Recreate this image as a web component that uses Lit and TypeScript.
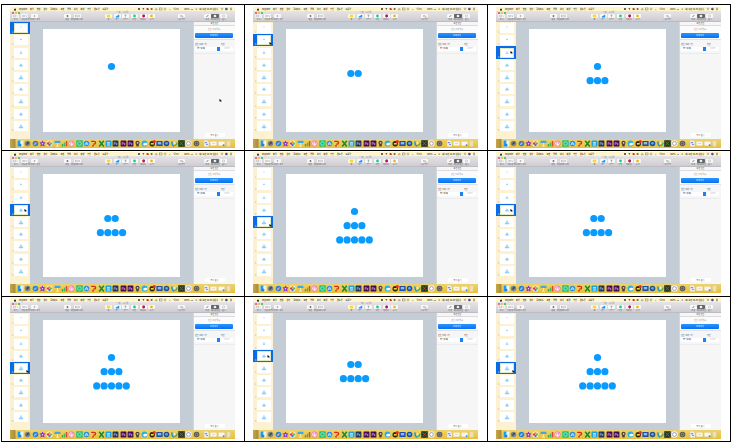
import { LitElement, html, svg, css, TemplateResult } from "lit";
import { customElement, property } from "lit/decorators.js";

const STEPS: number[][] = [[1], [2], [1, 3], [2, 4], [1, 3, 5]];
const THUMBS = [0, 1, 2, 3, 4, 3, 4, 3, 4];

// Dots stacked in centred rows, drawn on a 137 x 103 slide.
const dots = (step: number) => {
  const rows = STEPS[step];
  const top = rows[0] === 1 ? 37.5 : 44.5;
  return svg`${rows.map((count, r) =>
    Array.from({ length: count }, (_, i) => svg`<circle
      cx=${68.5 + (i - (count - 1) / 2) * 7.4} cy=${top + r * 14.2} r="3.6" fill="#0a9bff"/>`)
  )}`;
};

// At thumbnail size the dots melt into a soft pile.
const pile = (step: number) => {
  const rows = STEPS[step];
  const top = rows[0] === 1 ? 38 : 44;
  return svg`<g fill="#3fb0f8" opacity=".6">${rows.map((count, r) => {
    const w = count * 9;
    return svg`<rect x=${68.5 - w / 2} y=${top + r * 14 - 6} width=${w} height="14" rx="4"/>`;
  })}</g>`;
};

const tile = (bg: string, fg: string) => svg`
  <rect x="0.6" y="0.6" width="5.8" height="5.8" rx="0.4" fill=${bg}/>
  <path d="M2 5V2.4h1.4v1.4H2M4.4 5V3.2M5.4 3.2h-0.8v1.6h0.8" stroke=${fg} stroke-width="0.6" fill="none"/>`;
const disc = (bg: string, inner: unknown) => svg`<circle cx="3.5" cy="3.5" r="2.8" fill=${bg}/>${inner}`;

const DOCK: [string, unknown][] = [
  ["Finder", svg`<rect x=".6" y=".6" width="5.8" height="5.8" fill="#eaf4fc"/><path d="M.6.6h3L3 3.6h1v2.8H.6z" fill="#1c9cf0"/><path d="M2 4.8q1.6 1 3 0" stroke="#24466c" stroke-width=".5" fill="none"/>`],
  ["Launchpad", disc("#7e858c", svg`<path d="M2 5l1-2.4 2-1-.6 2.2z" fill="#333b44"/>`)],
  ["Safari", disc("#1d83e4", svg`<path d="M2 5l1-2 2-1-1 2z" fill="#fff"/><path d="M3 3l2-1-1 2z" fill="#e34a3a"/>`)],
  ["iMovie", svg`<path d="M3.5.4l1 1.9 2.1.2-1.5 1.6.5 2.3-2.1-1-2.1 1 .5-2.3L.4 2.5l2.1-.2z" fill="#8a2fc8"/><circle cx="3.5" cy="3.7" r=".8" fill="#eed8ff"/>`],
  ["사진", svg`<circle cx="3.5" cy="3.5" r="3" fill="#fff"/><circle cx="3.5" cy="2" r="1.2" fill="#f6a21c"/><circle cx="5" cy="3.5" r="1.2" fill="#6cc04a"/><circle cx="3.5" cy="5" r="1.2" fill="#4576d6"/><circle cx="2" cy="3.5" r="1.2" fill="#e2365c"/>`],
  ["Keynote", svg`<path d="M.8.8h5.4l.4 2.2H.4z" fill="#3aa9ec"/><path d="M3.2 3h.7v2.8h-.7zM2 5.8h3v.7H2z" fill="#eef5f8"/>`],
  ["Numbers", svg`<path d="M.8 4h1.4v2.4H.8z" fill="#27b14c"/><path d="M2.8 2.6h1.4v3.8H2.8z" fill="#36c25a"/><path d="M4.8 1h1.5v5.4H4.8z" fill="#e2453b"/>`],
  ["iTunes", svg`<circle cx="3.5" cy="3.5" r="2.7" fill="#fff" stroke="#e8589c" stroke-width=".7"/><path d="M2.8 4.8V2.2l2-.4v2.6" stroke="#d84bb0" stroke-width=".6" fill="none"/>`],
  ["메시지", svg`<rect x=".3" y=".3" width="6.4" height="6.4" fill="#1fc07a"/><circle cx="3.5" cy="3.5" r="1.8" fill="none" stroke="#b9f4d6" stroke-width=".7"/>`],
  ["App Store", disc("#2390f2", svg`<path d="M2 5l1.5-3L5 5M1.8 4h3.4" stroke="#fff" stroke-width=".6" fill="none"/>`)],
  ["PowerPoint", svg`<path d="M1.2 1.3h3a1.4 1.4 0 0 1 0 2.8H3.2" stroke="#d82c16" stroke-width="1.3" fill="none"/><path d="M2.2 5h1.6v1.5H2.2z" fill="#d82c16"/>`],
  ["Excel", svg`<path d="M1.2.8l4.6 5.6M5.8.8L1.2 6.4" stroke="#148a38" stroke-width="1.5" fill="none"/>`],
  ["Skype", svg`<rect x=".5" y=".4" width="6" height="6.2" rx="1" fill="#19a5e6"/><path d="M2 2h3v.8H2zM2 3.4h3v.8H2zM2 4.8h3v.6H2z" fill="#d8f4ff"/>`],
  ["Photoshop", tile("#20305c", "#8fb6ea")],
  ["Premiere", tile("#430b4e", "#d68be4")],
  ["After Effects", tile("#3c0b52", "#c79bf0")],
  ["Final Cut", svg`<circle cx="3.5" cy="2.8" r="2.1" fill="#46423a"/><path d="M2.3 4h2.4v2.4H2.3z" fill="#4b3c2c"/><circle cx="3.6" cy="2.8" r=".9" fill="#d9d4c4"/>`],
  ["Explorer", svg`<circle cx="3.5" cy="3.5" r="2.9" fill="#25b0ee"/><path d="M2 4q2-2 4.6-.6-1 2.6-3.8 1.8z" fill="#fff"/>`],
  ["카카오톡", svg`<circle cx="3.2" cy="3.7" r="2.7" fill="#2b2417"/><path d="M1.8 3h3v1.6h-3z" fill="#f6d531"/><circle cx="5.2" cy="1.6" r="1.6" fill="#ee2a20"/>`],
  ["미리보기", svg`<rect x=".4" y="1" width="6.2" height="5" rx=".5" fill="#1e4fae"/><path d="M1.8 2h3.4v2.4H1.8z" fill="#8fb9f2"/>`],
  ["QuickTime", svg`<circle cx="3.5" cy="3.5" r="2.8" fill="#1b4f9c"/><circle cx="3.5" cy="3.3" r="1.4" fill="#59a8f0"/>`],
  ["네트워크", svg`<path d="M1 1.4q-.4 4 2.2 4.6" stroke="#1a92cf" stroke-width="1.4" fill="none"/><path d="M3.4 5.6q2.6-.2 2.6-3" stroke="#42aa5f" stroke-width="1.2" fill="none"/><circle cx="3.6" cy="3" r=".9" fill="#f2f2e6"/>`],
  ["활동 상태", svg`<rect x=".2" y=".2" width="6.6" height="6.6" fill="#26352a"/><path d="M1.4 1.4l4 4M5.4 1.4l-4 4" stroke="#4c8a3c" stroke-width=".8"/><circle cx="3.5" cy="3.5" r=".7" fill="#c43c2a"/>`],
  ["디스크", svg`<circle cx="3.5" cy="3.5" r="3.2" fill="#f4f2f4"/><circle cx="3.5" cy="3.5" r="1.9" fill="#fff" stroke="#6a6a8c" stroke-width=".6"/>`],
  ["설정", svg`<circle cx="3.5" cy="3.5" r="2.8" fill="#55575b"/><circle cx="3.5" cy="3.5" r="1.4" fill="none" stroke="#a0a2a6" stroke-width=".7"/>`],
];

const FOLDERS: [string, unknown][] = [
  ["문서", svg`<path d="M1.2.5h3.2l1.4 1.4v4.6H1.2z" fill="#e8eefc"/><path d="M1.8 2h2.4v1.2H1.8zM3 4h2v1H3z" fill="#7f95dd"/>`],
  ["다운로드", svg`<path d="M.4 1.6h6.2v4H.4z" fill="#f6f6f6"/><path d="M2 3h3v.8H2z" fill="#d3d3dc"/>`],
  ["스크린샷", svg`<path d="M.4 1.6h6.2v4H.4z" fill="#f4f6fb"/><path d="M4.8 4.4h1.6v1.6H4.8z" fill="#2b8ceb"/>`],
  ["휴지통", svg`<path d="M1.4.8h4.2L5.2 6.5H1.8z" fill="#eee2b4" stroke="#d5c89c" stroke-width=".4"/>`],
];

const shape = (kind: string): unknown => {
  switch (kind) {
    case "play": return svg`<path d="M3.2.9l2.2 1.1-2.2 1.1z" fill="#333"/>`;
    case "plus": return svg`<path d="M4 1v2M3 2h2" stroke="#777" stroke-width=".5"/>`;
    case "pane": return svg`<path d="M1.4 1h2.8v2H1.4zM5.4 1.6l.7.8.7-.8" stroke="#999" stroke-width=".5" fill="none"/>`;
    case "zoom": return svg`<path d="M1.4 2h3M5.4 1.6l.7.8.7-.8" stroke="#555" stroke-width=".6" fill="none"/>`;
    case "live": return svg`<rect x="2" y="1" width="4" height="2" fill="none" stroke="#999" stroke-width=".5"/>`;
    case "table": return svg`<rect x="2" y=".4" width="4" height="3.2" fill="#ffd91e"/>`;
    case "chart": return svg`<path d="M2 3.6V2.6L6 .4v3.2z" fill="#169af5"/>`;
    case "text": return svg`<path d="M2.8 1h2.4M4 1v2.4" stroke="#777" stroke-width=".6"/>`;
    case "shape": return svg`<circle cx="4" cy="2" r="1.6" fill="#15d08c"/>`;
    case "media": return svg`<circle cx="4" cy="2" r="1.6" fill="#e31f2c"/><path d="M4 .4a1.6 1.6 0 0 1 0 3.2z" fill="#8c1a86"/>`;
    case "note": return svg`<circle cx="4" cy="2" r="1.6" fill="#ffd21a"/><path d="M3 2h2" stroke="#b46c10" stroke-width=".7"/>`;
    case "share": return svg`<path d="M2.8 3.2V1.4h1.6M4 2h1.6v1.2H3.4" stroke="#888" stroke-width=".5" fill="none"/>`;
    case "brush": return svg`<path d="M2.8 3.2L4.8 1" stroke="#444" stroke-width=".8"/>`;
    case "motion": return svg`<path d="M4 .5l1.6 1.5L4 3.5 2.4 2z" fill="#fff"/>`;
    default: return svg`<circle cx="4" cy="2" r="1.3" fill="none" stroke="#888" stroke-width=".4"/>`;
  }
};

const tool = (kind: string, label: string): TemplateResult => html`
  <button class="tool ${kind === "motion" ? "active" : ""}">
    <svg class="glyph" viewBox="0 0 8 4" aria-hidden="true">${shape(kind)}</svg>
    <span class="caption">${label}</span>
  </button>`;

@customElement("keynote-screen")
export class KeynoteScreen extends LitElement {
  @property({ type: Number }) selected = 0;
  @property({ type: Number }) index = 0;

  static styles = css`
    :host {
      display: grid;
      grid-template-rows: 4px 11px 117px 9px;
      overflow: hidden;
      position: relative;
      color: #4a463a;
      font: 2px/3px "Noto Sans CJK KR", "Liberation Sans", sans-serif;
    }
    * { box-sizing: border-box; }
    button, select, input { font: inherit; color: inherit; margin: 0; padding: 0; border: 0; background: none; }
    svg { display: block; }

    .menubar { display: flex; align-items: center; justify-content: space-between; background: #fff5cb; padding: 0 3px 0 4px; color: #4b473a; font-weight: 700; }
    .menus, .status { display: flex; align-items: center; gap: 3px; white-space: nowrap; }
    .apple { width: 2px; height: 3px; }
    .status { gap: 2px; }
    .status svg { width: 44px; height: 4px; }
    .status .tail { width: 12px; }

    .toolbar { background: linear-gradient(#e6e4e7, #cfcdd1); border-bottom: 1px solid #bdbcc2; display: grid; grid-template-rows: 3px 7px; }
    .titlebar { display: grid; grid-template-columns: 1fr auto 1fr; align-items: center; padding: 0 2px; }
    .lights { display: flex; gap: 1px; }
    .light { width: 2px; height: 2px; border-radius: 1px; background: #f4433c; }
    .light.min { background: #f5b52c; }
    .light.max { background: #29bf3b; }
    .title { color: #77757b; }
    .tools { display: grid; grid-template-columns: 29fr 23fr 20fr 22fr 52fr 20fr 10fr 17fr 25fr 7fr; align-items: start; }
    .group { display: flex; justify-content: space-between; }
    .group.first { padding-left: 1px; }
    .tool { flex: 1; min-width: 0; display: flex; flex-direction: column; align-items: center; color: #55535a; }
    .glyph { width: 7px; height: 4px; background: #f8f8f9; border-radius: 1px; }
    .active .glyph { background: #66666a; width: 8px; }
    .caption { white-space: nowrap; }

    .work { display: grid; grid-template-columns: 20px 1fr 42px; min-height: 0; }
    .slides { list-style: none; margin: 0; padding: 0 0 7px; background: linear-gradient(90deg, #fbf0cf, #fdf3d4); display: grid; grid-auto-rows: 1fr; }
    .slides li { display: flex; min-height: 0; }
    .slide-button { width: 100%; display: flex; align-items: center; justify-content: flex-end; padding-right: 2px; gap: 1px; }
    .number { color: #a39e88; align-self: end; }
    .thumb { width: 14px; height: 10px; background: #fff; }
    .selected .slide-button { background: #0a6be6; }
    .selected .thumb { box-shadow: inset 0 0 0 1px #dfe9c4; }
    .selected .number { color: #fff; }

    .stage { background: #c4ccd6; padding: 7px 13px; }
    .canvas { width: 100%; height: 103px; background: #fff; }

    .panel { background: #f6f6f7; border-left: 1px solid #d4d6da; display: flex; flex-direction: column; }
    .heading { height: 4px; text-align: center; border-bottom: 1px solid #dcdcde; }
    .effect { height: 14px; padding: 2px 2px 0 1px; background: #fbfbfb; border-bottom: 1px solid #e2e2e4; display: grid; grid-template-rows: 5px 5px; text-align: center; color: #98989c; }
    .add { background: linear-gradient(#2a95ff, #0670f3); color: #fff; border-radius: 1px; }
    .timing { padding: 3px 2px 0 1px; display: grid; grid-template-columns: 25px 12px; column-gap: 1px; row-gap: 1px; height: 14px; grid-template-rows: 3px 4px; border-bottom: 1px solid #ececee; }
    .timing label { color: #444; }
    .field { height: 4px; min-width: 0; width: 100%; background: #fff; line-height: 4px; }
    select.field { appearance: none; padding-left: 2px; background: linear-gradient(#1b82f6, #1b82f6) right / 3px 4px no-repeat #fff; color: #222; }
    input.field { text-align: center; color: #b4b4b8; }
    .order { margin: auto 0 2px; align-self: center; width: 20px; height: 4px; background: #fff; border-radius: 1px; }

    .dock { background: linear-gradient(90deg, #c9a746, #a98c3c 5px, #0000 6px), linear-gradient(#ecd36d, #e8bf3c); display: flex; align-items: center; padding: 0 3px 0 7px; }
    .apps { flex: 181; display: flex; }
    .folders { flex: 29; display: flex; margin-left: 3px; }
    .icon { flex: 1; min-width: 0; }
    .icon svg { width: 7px; height: 7px; margin: auto; }

    .cursor { position: absolute; width: 3px; height: 3px; }
  `;

  render() {
    const free = this.index === 0;
    const low = this.selected === 1 || this.selected === 4;
    const left = free ? 209 : low ? 16 : 14;
    const top = free ? 92 : 15 + Math.round(this.selected * 12.2) + (low ? 8 : 5);
    return html`
      <nav class="menubar">
        <div class="menus">
          <svg class="apple" viewBox="0 0 2 3"><circle cx="1" cy="1.8" r="1" fill="#222"/><path d="M1 .8L1.5.1" stroke="#222" stroke-width=".4"/></svg>
          <span class="app">Keynote</span>
          ${["파일", "편집", "삽입", "슬라이드", "포맷", "정렬", "보기", "재생", "공유", "윈도우", "도움말"].map((m) => html`<span>${m}</span>`)}
        </div>
        <div class="status">
          <svg viewBox="0 0 44 4" aria-hidden="true">
            <g fill="#6a6655"><rect x="0" y="1" width="2" height="2"/><path d="M4.4 1h2l-1 2.2z"/><circle cx="13.6" cy="2" r="1.1"/><path d="M38 1.2h3v1.6h-3z" opacity=".5"/></g>
            <path d="M8.6 1h1.6l.8 2H8.6z" fill="#d8301f"/>
            <g fill="none" stroke="#7a7665" stroke-width=".5"><path d="M17 2.8l1.2-1.6 1.2 1.6z"/><rect x="21.4" y="1" width="2.6" height="2"/><circle cx="27" cy="2" r="1"/><path d="M31 2.6h1.4M35.6 1.4q1.4-.8 2.6 0L36.9 3z"/></g>
          </svg>
          <span>100%</span><span>▭</span><span>A</span><span>(화) 오전 10:48 김현수</span>
          <svg class="tail" viewBox="0 0 12 4" aria-hidden="true"><circle cx="2" cy="1.8" r=".8" fill="none" stroke="#555" stroke-width=".4"/><circle cx="6.4" cy="2" r="1.2" fill="#44307c"/><circle cx="6.8" cy="1.7" r=".5" fill="#3cc6e8"/><path d="M10 1.2h2M10 2h2M10 2.8h2" stroke="#444" stroke-width=".4"/></svg>
        </div>
      </nav>
      <header class="toolbar">
        <div class="titlebar">
          <div class="lights"><span class="light"></span><span class="light min"></span><span class="light max"></span></div>
          <span class="title">무제 — 수정됨</span>
        </div>
        <div class="tools">
          <div class="group first">${tool("pane", "보기")}${tool("zoom", "확대/축소")}${tool("plus", "슬라이드 추가")}</div>
          <span></span>
          <div class="group">${tool("play", "재생")}${tool("live", "Keynote Live")}</div>
          <span></span>
          <div class="group">${tool("table", "표")}${tool("chart", "차트")}${tool("text", "텍스트")}${tool("shape", "도형")}${tool("media", "미디어")}${tool("note", "주석")}</div>
          <span></span>
          <div class="group">${tool("share", "공동 작업")}</div>
          <span></span>
          <div class="group">${tool("brush", "포맷")}${tool("motion", "애니메이션")}${tool("doc", "문서")}</div>
        </div>
      </header>
      <main class="work">
        <ol class="slides">
          ${THUMBS.map((step, i) => html`
            <li class=${i === this.selected ? "selected" : ""}>
              <button class="slide-button" aria-label="슬라이드 ${i + 1}">
                <span class="number">${i + 1}</span>
                <svg class="thumb" viewBox="0 0 137 103" aria-hidden="true">${pile(step)}</svg>
              </button>
            </li>`)}
        </ol>
        <section class="stage"><svg class="canvas" viewBox="0 0 137 103">${dots(this.selected)}</svg></section>
        <aside class="panel">
          <div class="heading">화면 전환</div>
          <div class="effect"><span>전환 효과 없음</span><button class="add">효과 추가</button></div>
          <div class="timing">
            <label for="start">전환 효과 시작</label><label for="delay">지연</label>
            <select id="start" class="field"><option>클릭할 때</option></select>
            <input id="delay" class="field" value="0.00초" />
          </div>
          <button class="order">빌드 순서</button>
        </aside>
      </main>
      <footer class="dock">
        <div class="apps">${DOCK.map(([name, art]) => html`<button class="icon" aria-label=${name}><svg viewBox="0 0 7 7">${art}</svg></button>`)}</div>
        <div class="folders">${FOLDERS.map(([name, art]) => html`<button class="icon" aria-label=${name}><svg viewBox="0 0 7 7">${art}</svg></button>`)}</div>
      </footer>
      <svg class="cursor" viewBox="0 0 3 3" style="left:${left}px;top:${top}px" aria-hidden="true"><path d="M.4 0v2.6l.8-.5.6.9.7-.5-.5-.8.8-.2z" fill="#111"/></svg>
    `;
  }
}

@customElement("app-root")
export class AppRoot extends LitElement {
  static styles = css`
    :host { display: block; background: #fff; padding: 4px 5px 1px 1px; }
    .sheet { display: grid; grid-template-columns: repeat(3, 1fr); border: solid #000; border-width: 1px 0 0 1px; }
    .cell { min-width: 0; border: solid #000; border-width: 0 1px 1px 0; padding: 2px 9px 2px 8px; }
    .cell:nth-child(n + 4) { padding-top: 1px; padding-bottom: 3px; }
    .cell:nth-child(n + 7) { padding-bottom: 2px; }
  `;

  render() {
    return html`<div class="sheet">
      ${[0, 1, 2, 3, 4, 3, 4, 3, 4].map((selected, index) => html`
        <div class="cell"><keynote-screen .selected=${selected} .index=${index}></keynote-screen></div>`)}
    </div>`;
  }
}
